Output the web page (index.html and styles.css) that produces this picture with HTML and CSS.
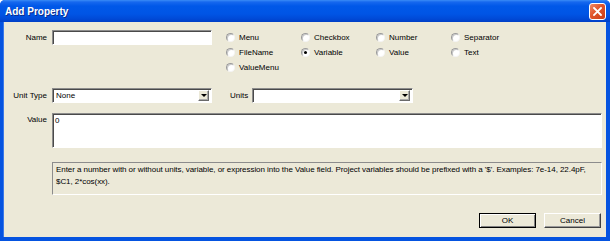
FILE: index.html
```html
<!DOCTYPE html>
<html lang="en">
<head>
    <meta charset="UTF-8">
    <title>Add Property</title>
    <link rel="stylesheet" href="styles.css">
</head>
<body>
    <div class="window">
        <div class="titlebar">
            <span class="title">Add Property</span>
            <button class="close" title="Close">
                <svg width="9" height="9" viewBox="0 0 9 9"><path d="M1 1 L8 8 M8 1 L1 8" stroke="#fff" stroke-width="1.8" stroke-linecap="square"/></svg>
            </button>
        </div>
        <div class="client">
            <div class="top-row">
                <label class="lbl">Name</label>
                <div class="field name-field"></div>
                <div class="radios">
                    <div class="radio"><span class="dot"></span>Menu</div>
                    <div class="radio"><span class="dot"></span>Checkbox</div>
                    <div class="radio"><span class="dot"></span>Number</div>
                    <div class="radio"><span class="dot"></span>Separator</div>
                    <div class="radio"><span class="dot"></span>FileName</div>
                    <div class="radio"><span class="dot checked"></span>Variable</div>
                    <div class="radio"><span class="dot"></span>Value</div>
                    <div class="radio"><span class="dot"></span>Text</div>
                    <div class="radio"><span class="dot"></span>ValueMenu</div>
                </div>
            </div>

            <div class="unit-row">
                <label class="lbl">Unit Type</label>
                <div class="field combo unit-type"><span>None</span><span class="drop"></span></div>
                <label class="units-lbl">Units</label>
                <div class="field combo units"><span></span><span class="drop"></span></div>
            </div>

            <div class="value-row">
                <label class="lbl">Value</label>
                <div class="field value-box">0</div>
            </div>

            <div class="help-row">
                <div class="help">Enter a number with or without units, variable, or expression into the Value field. Project variables should be prefixed with a '$'. Examples: 7e-14, 22.4pF, $C1, 2*cos(xx).</div>
            </div>

            <div class="buttons">
                <button class="btn btn-default">OK</button>
                <button class="btn">Cancel</button>
            </div>
        </div>
    </div>
</body>
</html>
```

FILE: styles.css
```css
body { margin: 0; font-family: "Liberation Sans", Arial, sans-serif; font-size: 8px; color: #000; }
.window { width: 610px; height: 241px; background: #0553e0; display: flex; flex-direction: column; box-sizing: border-box; border-radius: 5px 5px 0 0; overflow: hidden; }

.titlebar { height: 22px; display: flex; align-items: center; justify-content: space-between; padding: 0 4px 0 5px;
    background: linear-gradient(#3a8cf6 0, #1668ee 2px, #0058e8 6px, #0055e5 14px, #0049d6 19px, #003fc6 22px); }
.title { color: #fff; font-weight: bold; font-size: 10px; text-shadow: 1px 1px 0 #0a2c8c; }
.close { width: 17px; height: 17px; padding: 0; border: 1px solid #fff; border-radius: 3px; display: flex; align-items: center; justify-content: center;
    background: linear-gradient(135deg, #f08a68, #e0552b 45%, #c83d17); }

.client { flex: 1; margin: 0 4px 4px 3px; background: #ece9d8; padding-top: 8px; display: flex; flex-direction: column; border-left: 1px solid #3a78e8; }

.lbl { width: 43px; text-align: right; padding-right: 5px; flex: none; }

.field { background: #fff; box-sizing: border-box; border: 1px solid; border-color: #8c8c8c #fff #fff #8c8c8c; box-shadow: inset 1px 1px 0 #4a4a4a; }

.top-row { display: flex; align-items: flex-start; height: 45px; }
.top-row .lbl { line-height: 15px; }
.name-field { width: 160px; height: 15px; }

.radios { display: grid; grid-template-columns: repeat(4, 75px); grid-auto-rows: 15px; margin-left: 14px; }
.radio { display: flex; align-items: center; }
.dot { width: 9px; height: 9px; box-sizing: border-box; border-radius: 50%; background: #fff; margin-right: 4px; position: relative;
    border: 1px solid; border-color: #9a9a9a #f4f4f4 #f4f4f4 #9a9a9a; box-shadow: inset 1px 1px 0 #c8c8c8; }
.dot.checked::after { content: ""; position: absolute; left: 2px; top: 2px; width: 3px; height: 3px; border-radius: 50%; background: #000; }

.unit-row { display: flex; align-items: center; margin-top: 13px; height: 15px; }
.combo { height: 15px; display: flex; align-items: center; justify-content: space-between; padding: 0 2px 0 3px; }
.unit-type { width: 160px; }
.units-lbl { margin-left: 18px; width: 17px; margin-right: 5px; }
.units { width: 161px; }
.drop { width: 11px; height: 11px; box-sizing: border-box; background: #ece9d8; display: flex; align-items: center; justify-content: center;
    border: 1px solid; border-color: #fff #6a6a6a #6a6a6a #fff; box-shadow: inset -1px -1px 0 #aaa; }
.drop::after { content: ""; border-left: 3px solid transparent; border-right: 3px solid transparent; border-top: 3px solid #000; }

.value-row { display: flex; align-items: flex-start; margin-top: 10px; }
.value-row .lbl { padding-top: 2px; }
.value-box { width: 550px; height: 35px; padding: 2px 2px; line-height: 10px; }

.help-row { display: flex; margin-top: 14px; padding-left: 48px; }
.help { width: 550px; height: 33px; box-sizing: border-box; padding: 1px 3px; line-height: 12px; letter-spacing: -0.06px;
    border: 1px solid; border-color: #8c8c8c #fff #fff #8c8c8c; }

.buttons { display: flex; justify-content: flex-end; gap: 8px; margin-top: 18px; padding-right: 5px; }
.btn { width: 57px; height: 15px; padding: 0; font-family: inherit; font-size: 8px; background: #ece9d8; color: #000;
    border: 1px solid; border-color: #fff #404040 #404040 #fff; box-shadow: inset -1px -1px 0 #9a9a9a; }
.btn-default { border-color: #000; box-shadow: inset 1px 1px 0 #fff, inset -1px -1px 0 #808080; }
```
